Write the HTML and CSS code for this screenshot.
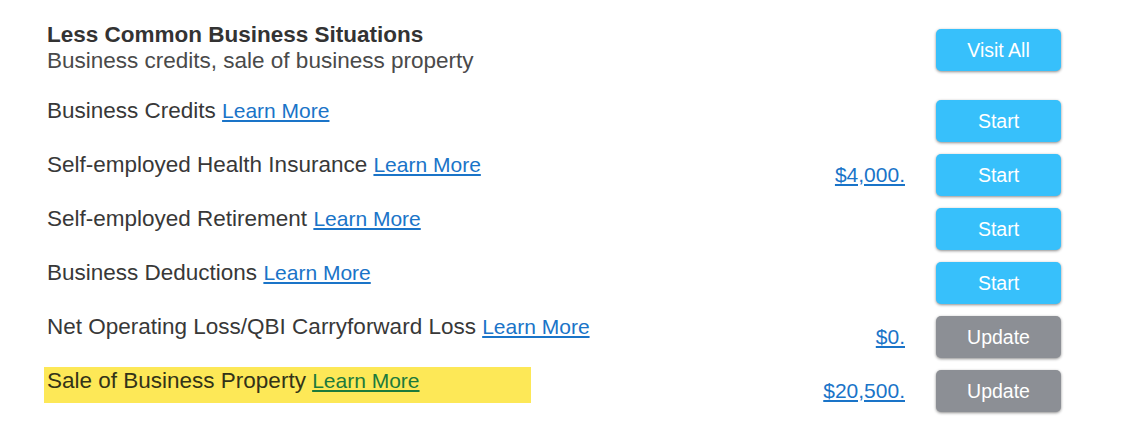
FILE: index.html
```html
<!DOCTYPE html>
<html>
<head>
  <title>Less Common Business Situations</title>
  <link rel="stylesheet" href="styles.css">
</head>
<body>
  <div class="section">
    <div class="row header">
      <div class="label">
        <div class="title">Less Common Business Situations</div>
        <div class="subtitle">Business credits, sale of business property</div>
      </div>
      <div class="amount"></div>
      <button class="btn">Visit All</button>
    </div>

    <div class="row">
      <div class="label">Business Credits <a href="#">Learn More</a></div>
      <div class="amount"></div>
      <button class="btn">Start</button>
    </div>

    <div class="row">
      <div class="label">Self-employed Health Insurance <a href="#">Learn More</a></div>
      <div class="amount"><a href="#">$4,000.</a></div>
      <button class="btn">Start</button>
    </div>

    <div class="row">
      <div class="label">Self-employed Retirement <a href="#">Learn More</a></div>
      <div class="amount"></div>
      <button class="btn">Start</button>
    </div>

    <div class="row">
      <div class="label">Business Deductions <a href="#">Learn More</a></div>
      <div class="amount"></div>
      <button class="btn">Start</button>
    </div>

    <div class="row">
      <div class="label">Net Operating Loss/QBI Carryforward Loss <a href="#">Learn More</a></div>
      <div class="amount"><a href="#">$0.</a></div>
      <button class="btn btn-done">Update</button>
    </div>

    <div class="row">
      <div class="label highlight">Sale of Business Property <a href="#">Learn More</a></div>
      <div class="amount"><a href="#">$20,500.</a></div>
      <button class="btn btn-done">Update</button>
    </div>
  </div>
</body>
</html>
```

FILE: styles.css
```css
body {
  margin: 0;
  background: #fff;
  font-family: "Liberation Sans", Arial, sans-serif;
  color: #383838;
}
.section {
  width: 1014px;
  padding: 22px 0 0 47px;
}
.row {
  display: grid;
  grid-template-columns: 1fr auto 125px;
  column-gap: 31px;
  align-items: center;
  min-height: 54px;
}
.header {
  min-height: 52px;
  margin-bottom: 20px;
}
.header .btn {
  align-self: start;
  margin-top: 7px;
}
.label {
  align-self: start;
  padding-top: 4px;
  font-size: 22.5px;
  line-height: 26px;
}
.header .label {
  padding-top: 0;
}
.title {
  font-weight: bold;
  color: #333;
}
.subtitle {
  color: #4a4a4a;
}
.label a, .amount a {
  color: #1a74c8;
  font-size: 21px;
}
.amount {
  text-align: right;
  font-size: 21px;
}
.highlight {
  justify-self: start;
  width: 481px;
  margin: 3px 0 0 -3px;
  padding: 1px 3px 9px;
  background: #fde857;
  color: #333318;
}
.highlight a {
  color: #1c7a3c;
}
.btn {
  width: 125px;
  height: 42px;
  border: none;
  border-radius: 5px;
  background-color: #37c0fb;
  color: #fff;
  font-family: "Liberation Sans", Arial, sans-serif;
  font-size: 19.5px;
  box-shadow: 0 1px 3px rgba(0, 0, 0, 0.45);
  cursor: pointer;
}
.btn-done {
  background-color: #8c8f95;
}
```
